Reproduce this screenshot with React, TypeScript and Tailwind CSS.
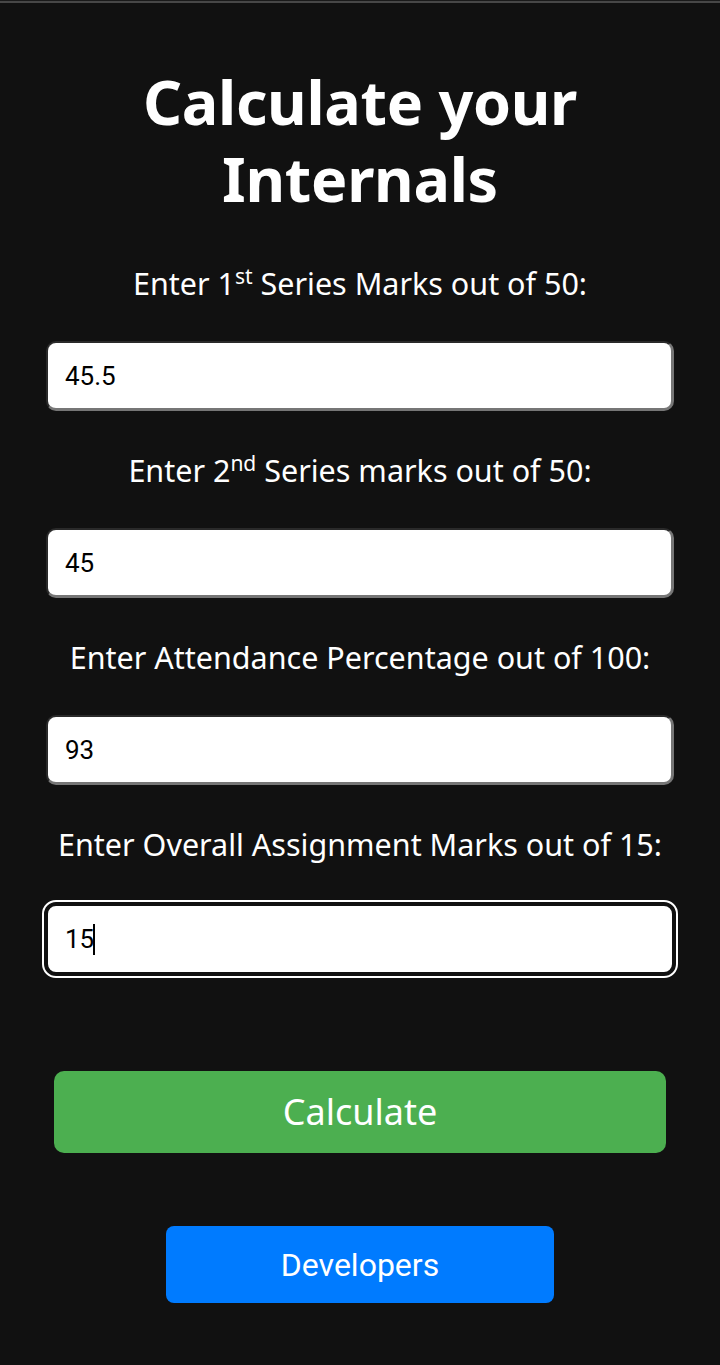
import { useState } from "react";

const sup = "relative -top-[11px] text-[21px] leading-none";

const fields = [
  { label: <>Enter 1<span className={sup}>st</span> Series Marks out of 50:</>, value: "45.5" },
  { label: <>Enter 2<span className={sup}>nd</span> Series marks out of 50:</>, value: "45" },
  { label: <>Enter Attendance Percentage out of 100:</>, value: "93" },
  { label: <>Enter Overall Assignment Marks out of 15:</>, value: "15" },
];

const App = () => {
  const [values, setValues] = useState(fields.map((f) => f.value));

  return (
    <div className="min-h-[1365px] bg-[#111111] text-white font-['Noto_Sans',sans-serif]">
      <div className="h-[1px] bg-[#1a1a1a]" />
      <div className="h-[2px] bg-[#474747]" />
      <div className="flex flex-col items-center px-[46px]">
        <h1 className="mt-[60px] text-center text-[61px] font-bold leading-[77px] tracking-[-0.3px]">
          Calculate your
          <br />
          Internals
        </h1>
        <div className="mt-[48px] w-full">
          {fields.map((f, i) => {
            const focused = i === 3;
            return (
              <div key={i} className="flex flex-col items-center">
                <label className="h-[36px] text-[30.5px] leading-[36px] whitespace-nowrap">{f.label}</label>
                <div
                  className={`relative mt-[40px] mb-[41px] w-full rounded-[10px] ${
                    focused ? "mt-[42px] outline-2 outline-white outline-offset-[2px]" : ""
                  }`}
                >
                  <input
                    value={values[i]}
                    onChange={(e) =>
                      setValues(values.map((v, j) => (j === i ? e.target.value : v)))
                    }
                    className={`block h-[70px] w-full rounded-[10px] bg-white px-[17px] font-['Roboto',sans-serif] text-[26px] text-black outline-none ${
                      focused
                        ? "border-2 border-[#111111]"
                        : "border-t-2 border-l-2 border-b-[3px] border-r-[3px] border-t-[#2a2a2a] border-l-[#2a2a2a] border-b-[#767676] border-r-[#767676]"
                    }`}
                  />
                  {focused && (
                    <span className="absolute left-[47px] top-[20px] h-[31px] w-[2px] bg-black" />
                  )}
                </div>
              </div>
            );
          })}
        </div>
        <button className="mt-[56px] h-[82px] w-[612px] rounded-[10px] bg-[#4caf50] text-[36px] text-white">
          Calculate
        </button>
        <button className="mt-[73px] h-[77px] w-[388px] rounded-[8px] bg-[#007bff] font-['Roboto',sans-serif] text-[32px] text-white">
          Developers
        </button>
      </div>
    </div>
  );
};

export default App;
